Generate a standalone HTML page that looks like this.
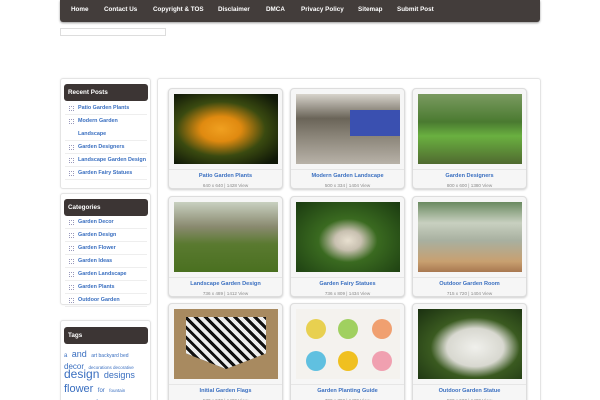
<!DOCTYPE html>
<html><head><meta charset="utf-8"><style>
*{margin:0;padding:0;box-sizing:border-box}
html,body{width:600px;height:400px;overflow:hidden}
body{background:#fff;font-family:"Liberation Sans",sans-serif;position:relative}
.nav{position:absolute;left:60px;top:0;width:480px;height:22px;background:#433d3b;border-radius:0 0 3px 3px;box-shadow:0 1px 2px #999}
.nav span{position:absolute;top:6px;color:#fff;font-size:6.3px;font-weight:bold;white-space:nowrap}
.search{position:absolute;left:60px;top:28px;width:106px;height:8px;border:1px solid #ddd}
.box{position:absolute;border:1px solid #e4e4e4;border-radius:3px;background:#fff;box-shadow:0 0 2px #eee}
.hd{position:absolute;left:3px;width:84px;height:17px;background:#3c3534;border-radius:3px;color:#fff;font-size:6.3px;font-weight:bold;padding:5px 0 0 4px}
.li{position:absolute;left:4px;width:82px;font-size:5.4px;color:#3a6fc0;font-weight:bold;border-bottom:1px solid #eee;padding-left:13px;height:13px;line-height:12px}
.li:before{content:"";position:absolute;left:4px;top:4px;width:3px;height:3px;border:1px dotted #99b}
.card{position:absolute;width:115px;height:101px;border:1px solid #ddd;border-radius:4px;background:#f6f6f6;box-shadow:0 1px 2px #ccc}
.card .im{position:absolute;left:5px;top:5px;width:104px;height:70px}
.card .t{position:absolute;left:0;width:100%;top:84px;text-align:center;font-size:5.6px;font-weight:bold;color:#3a6fc0}
.card .m{position:absolute;left:0;width:100%;top:94px;text-align:center;font-size:4.6px;color:#888}
.card .ln{position:absolute;left:0;top:80px;width:100%;border-top:1px solid #e6e6e6}
.tg{position:absolute;left:64px;color:#3a6fc0;white-space:nowrap;line-height:1}
</style></head><body>
<div class="nav">
<span style="left:11px">Home</span><span style="left:44px">Contact Us</span><span style="left:93px">Copyright &amp; TOS</span><span style="left:158px">Disclaimer</span><span style="left:206px">DMCA</span><span style="left:241px">Privacy Policy</span><span style="left:298px">Sitemap</span><span style="left:337px">Submit Post</span>
</div>
<div class="search"></div>

<div class="box" style="left:60px;top:78px;width:91px;height:111px">
<div class="hd" style="top:5px">Recent Posts</div>
<div class="li" style="top:23px">Patio Garden Plants</div>
<div class="li" style="top:36px;height:26px;line-height:13px">Modern Garden<br>Landscape</div>
<div class="li" style="top:62px">Garden Designers</div>
<div class="li" style="top:75px">Landscape Garden Design</div>
<div class="li" style="top:88px">Garden Fairy Statues</div>
</div>
<div class="box" style="left:60px;top:193px;width:91px;height:112px">
<div class="hd" style="top:5px">Categories</div>
<div class="li" style="top:22px">Garden Decor</div>
<div class="li" style="top:35px">Garden Design</div>
<div class="li" style="top:48px">Garden Flower</div>
<div class="li" style="top:61px">Garden Ideas</div>
<div class="li" style="top:74px">Garden Landscape</div>
<div class="li" style="top:87px">Garden Plants</div>
<div class="li" style="top:100px">Outdoor Garden</div>
</div>
<div class="box" style="left:60px;top:320px;width:91px;height:90px">
<div class="hd" style="top:6px">Tags</div>
</div>
<div class="tg" style="top:345px"><span style="font-size:6px">a</span> <span style="font-size:9px">and</span> <span style="font-size:5px">art backyard bed</span></div>
<div class="tg" style="top:357px"><span style="font-size:8px">decor</span> <span style="font-size:4.5px">decorations decorative</span></div>
<div class="tg" style="top:366px"><span style="font-size:12px">design</span> <span style="font-size:9px">designs</span></div>
<div class="tg" style="top:380px"><span style="font-size:11px">flower</span> <span style="font-size:6px">for</span> <span style="font-size:4.5px">fountain</span></div>
<div class="tg" style="top:393px"><span style="font-size:4.5px">fountains free</span> <span style="font-size:7px">front</span></div>

<div class="box" style="left:157px;top:78px;width:384px;height:340px"></div>

<div class="card" style="left:168px;top:88px"><div class="im" style="background:radial-gradient(ellipse at 45% 50%,#f0a020 0,#e08a10 25%,#3a4a10 55%,#101808 90%)"></div><div class="ln"></div><div class="t">Patio Garden Plants</div><div class="m">640 x 640 | 1428 View</div></div>
<div class="card" style="left:290px;top:88px"><div class="im" style="background:linear-gradient(180deg,#d8d4cc 0,#6a6458 35%,#8a8478 60%,#b8b2a8 100%);"><div style="position:absolute;right:0;top:16px;width:50px;height:26px;background:#3a50b0"></div></div><div class="ln"></div><div class="t">Modern Garden Landscape</div><div class="m">500 x 334 | 1404 View</div></div>
<div class="card" style="left:412px;top:88px"><div class="im" style="background:linear-gradient(180deg,#7a9a60 0,#4a7a30 40%,#6ab040 60%,#506a30 100%)"></div><div class="ln"></div><div class="t">Garden Designers</div><div class="m">800 x 600 | 1380 View</div></div>

<div class="card" style="left:168px;top:196px"><div class="im" style="background:linear-gradient(180deg,#c8d0c0 0,#8a8a70 35%,#5a7a30 60%,#4a7020 100%)"></div><div class="ln"></div><div class="t">Landscape Garden Design</div><div class="m">736 x 489 | 1412 View</div></div>
<div class="card" style="left:290px;top:196px"><div class="im" style="background:radial-gradient(ellipse at 50% 55%,#e8e0d0 0,#c8c0b0 18%,#3a6a20 40%,#1a3a10 100%)"></div><div class="ln"></div><div class="t">Garden Fairy Statues</div><div class="m">736 x 809 | 1434 View</div></div>
<div class="card" style="left:412px;top:196px"><div class="im" style="background:linear-gradient(180deg,#6a8a60 0,#c8d0c0 30%,#a8b0a0 55%,#c8a070 85%,#a87850 100%)"></div><div class="ln"></div><div class="t">Outdoor Garden Room</div><div class="m">715 x 720 | 1404 View</div></div>

<div class="card" style="left:168px;top:303px"><div class="im" style="background:#a88a60;"><div style="position:absolute;left:12px;top:8px;width:80px;height:52px;background:repeating-linear-gradient(45deg,#111 0 3px,#eee 3px 7px),#111;clip-path:polygon(0 0,100% 0,100% 70%,50% 100%,0 70%)"></div></div><div class="ln"></div><div class="t">Initial Garden Flags</div><div class="m">570 x 570 | 1400 View</div></div>
<div class="card" style="left:290px;top:303px"><div class="im" style="background:#f4f2ee"><div style="position:absolute;left:10px;top:10px;width:20px;height:20px;border-radius:50%;background:#e8d050"></div><div style="position:absolute;left:42px;top:10px;width:20px;height:20px;border-radius:50%;background:#a0d060"></div><div style="position:absolute;left:76px;top:10px;width:20px;height:20px;border-radius:50%;background:#f0a070"></div><div style="position:absolute;left:10px;top:42px;width:20px;height:20px;border-radius:50%;background:#60c0e0"></div><div style="position:absolute;left:42px;top:42px;width:20px;height:20px;border-radius:50%;background:#f0c020"></div><div style="position:absolute;left:76px;top:42px;width:20px;height:20px;border-radius:50%;background:#f0a0b0"></div></div><div class="ln"></div><div class="t">Garden Planting Guide</div><div class="m">700 x 700 | 1400 View</div></div>
<div class="card" style="left:412px;top:303px"><div class="im" style="background:radial-gradient(ellipse at 55% 55%,#f0f0ec 0,#d8d8d0 35%,#3a5a20 55%,#1a3010 100%)"></div><div class="ln"></div><div class="t">Outdoor Garden Statue</div><div class="m">500 x 500 | 1400 View</div></div>
</body></html>
